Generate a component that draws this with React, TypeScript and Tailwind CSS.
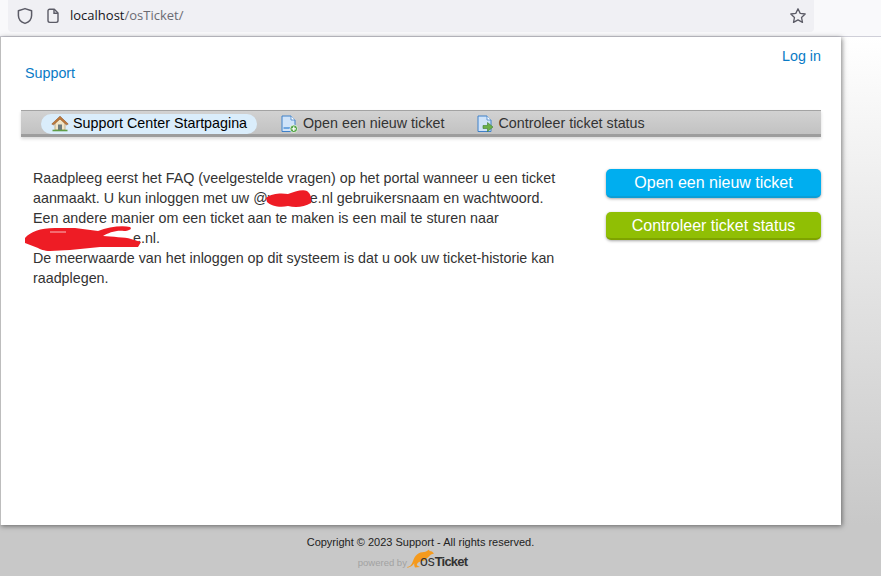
export default function App() {
  return (
    <div className="relative flex h-[576px] w-[881px] flex-col overflow-hidden font-['Liberation_Sans',Arial,sans-serif] [background-image:linear-gradient(to_bottom,#ffffff_37px,#c8c8c8_525px)]">
      <div className="flex h-[37px] w-full shrink-0 items-start border-b border-[#cfcfd8] bg-[#f9f9fb] pl-2">
        <div className="flex h-8 w-[806px] items-center rounded-b-[4px] bg-[#f0f0f4] pl-[8px] pr-[8px]">
          <svg width="18" height="18" viewBox="0 0 18 18" fill="none" stroke="#5b5b66" strokeWidth="1.5" className="shrink-0">
            <path d="M9 1.6 L15.6 3.8 V8.5 C15.6 12.6 12.6 15.2 9 16.4 C5.4 15.2 2.4 12.6 2.4 8.5 V3.8 Z" strokeLinejoin="round" />
          </svg>
          <svg width="16" height="16" viewBox="0 0 16 16" fill="none" stroke="#5b5b66" strokeWidth="1.4" className="ml-[11px] shrink-0">
            <path d="M3 2.8 A1.6 1.6 0 0 1 4.6 1.2 H9.3 L13 5 V12.6 A1.8 1.8 0 0 1 11.2 14.4 H4.8 A1.8 1.8 0 0 1 3 12.6 Z" strokeLinejoin="round" />
            <path d="M9 1.4 V5.3 H13" />
          </svg>
          <div className="ml-[9px] font-['Open_Sans',sans-serif] text-[13px] text-[#15141a]">
            localhost<span className="text-[#6b6b73]">/osTicket/</span>
          </div>
          <svg width="18" height="18" viewBox="0 0 18 18" fill="none" stroke="#5b5b66" strokeWidth="1.3" className="ml-auto translate-x-[1px] shrink-0">
            <path d="M9 1.8 L11.2 6.4 L16.2 7 L12.5 10.4 L13.5 15.4 L9 12.9 L4.5 15.4 L5.5 10.4 L1.8 7 L6.8 6.4 Z" strokeLinejoin="round" />
          </svg>
        </div>
      </div>

      <div className="relative flex h-[488px] w-[841px] shrink-0 flex-col border-l border-[#bdbdbd] bg-white px-5 shadow-[1px_1px_5px_rgba(0,0,0,0.5)]">
        <div className="flex justify-end pt-[11px] leading-4 text-[#0a7bc6]">
          <span className="text-[14.3px]">Log in</span>
        </div>
        <div className="pl-1 pt-[1px] text-[14.3px] leading-4 text-[#0a7bc6]">Support</div>

        <nav className="mt-[29px] flex h-[27px] w-[800px] items-center border-t border-b-[3px] border-t-[#a3a3a3] border-b-[#9d9d9d] bg-gradient-to-b from-[#d2d2d2] to-[#c2c2c2] pl-5 pt-[2px] text-[14.3px] text-[#333] shadow-[0_2px_3px_rgba(0,0,0,0.15)]">
          <div className="flex h-5 w-[216px] items-center rounded-[10px] bg-[#daedfb] pl-[10px] text-black">
            <svg width="18" height="17" viewBox="0 0 18 17" className="shrink-0">
              <path d="M4 8 V15 H14 V8 L9 3 Z" fill="#f1e4c6" stroke="#b59a6c" strokeWidth="0.7" />
              <rect x="7" y="9.5" width="4" height="5.5" fill="#6d7a7c" />
              <path d="M0.8 9 L9 1.2 L17.2 9 L15.4 9.8 L9 4 L2.6 9.8 Z" fill="#c07a3a" stroke="#8a5226" strokeWidth="0.6" />
              <path d="M1.5 15.5 H16.5" stroke="#5f9e47" strokeWidth="1.6" />
            </svg>
            <span className="ml-[4px]">Support Center Startpagina</span>
          </div>
          <div className="ml-[24px] flex items-center">
            <svg width="17" height="18" viewBox="0 0 17 18" className="shrink-0">
              <path d="M1 1 H10 L14 5 V16.5 H1 Z" fill="#cfe3f9" stroke="#3f80c8" strokeWidth="1" />
              <path d="M10 1 V5 H14" fill="#fff" stroke="#3f80c8" strokeWidth="0.8" />
              <rect x="2.5" y="12" width="7" height="2" fill="#6fa6e0" />
              <circle cx="12.8" cy="13.8" r="3.8" fill="#55a447" stroke="#fff" strokeWidth="0.7" />
              <path d="M12.8 11.6 V16 M10.6 13.8 H15" stroke="#fff" strokeWidth="1.3" />
            </svg>
            <span className="ml-[5px]">Open een nieuw ticket</span>
          </div>
          <div className="ml-[33px] flex items-center">
            <svg width="17" height="18" viewBox="0 0 17 18" className="shrink-0">
              <path d="M1 1 H10 L14 5 V16.5 H1 Z" fill="#cfe3f9" stroke="#3f80c8" strokeWidth="1" />
              <path d="M10 1 V5 H14" fill="#fff" stroke="#3f80c8" strokeWidth="0.8" />
              <path d="M6 10.5 H10.5 V7.5 L16 12 L10.5 16.5 V13.5 H6 Z" fill="#6cb04a" stroke="#3f7f30" strokeWidth="0.6" />
            </svg>
            <span className="ml-[4px]">Controleer ticket status</span>
          </div>
        </nav>

        <div className="mt-[31px] flex items-start justify-between">
          <div className="relative ml-3 w-[540px] text-[14.3px] leading-5 text-[#333]">
            <p>
              Raadpleeg eerst het FAQ (veelgestelde vragen) op het portal wanneer u een ticket
              <br />
              aanmaakt. U kun inloggen met uw @v<span className="inline-block w-[35px]" />e.nl gebruikersnaam en wachtwoord.
              <br />
              Een andere manier om een ticket aan te maken is een mail te sturen naar
              <br />
              <span className="inline-block w-[100px]" />e.nl.
              <br />
              De meerwaarde van het inloggen op dit systeem is dat u ook uw ticket-historie kan
              <br />
              raadplegen.
            </p>
            <svg width="320" height="70" viewBox="20 185 320 70" className="absolute left-[-13px] top-[17px]">
              <path d="M266 198 C272 193 282 193 288 194 C294 192 302 189 307 191 C311 194 312 199 311 203 C304 207 296 208 288 206 C280 208 271 206 267 202 Z" fill="#ee1c25" />
              <path d="M25 238 C30 232 40 228 55 228 L75 228 L98 231 C108 227 122 225 130 227 C133 229 128 231 124 231 C116 230 108 233 103 236 C112 237 125 237 131 239 L141 242 L138 247 L100 247 C90 248 80 249 70 250 L50 251 C44 251 40 249 38 248 L25 243 Z" fill="#ee1c25" />
              <path d="M50 232 H66" stroke="#fff" strokeWidth="1" opacity="0.7" />
            </svg>
          </div>
          <div className="mt-[1px] flex w-[215px] flex-col gap-[14px]">
            <div className="flex h-[29px] items-center justify-center rounded-[5px] border-b-2 border-[#0b9ed6] bg-[#00aeef] text-[16px] text-white shadow-[0_1px_3px_rgba(0,0,0,0.35)]">
              Open een nieuw ticket
            </div>
            <div className="flex h-[28px] items-center justify-center rounded-[5px] border-b-2 border-[#7ea300] bg-[#90bf04] pt-[2px] text-[16px] text-white shadow-[0_1px_3px_rgba(0,0,0,0.35)]">
              Controleer ticket status
            </div>
          </div>
        </div>
      </div>

      <div className="flex w-[841px] flex-col items-center pt-[11px]">
        <div className="text-[11px] leading-[13px] text-[#222]">Copyright © 2023 Support - All rights reserved.</div>
        <div className="mr-[16px] mt-[1px] flex h-[22px] items-end">
          <span className="mb-[3px] text-[9.5px] leading-3 text-[#a2a2a2]">powered by</span>
          <svg width="27" height="20" viewBox="0 0 27 20" className="mb-[3px] shrink-0">
            <path d="M0 18 C3 18 5 15 6 12 C8 6 12 3 17 3 C19 3 20 2 22 0.5 L22.5 2 L25 2.5 L27 4.5 L24 5.5 C22 7 21 9 19 10 C18 12 14 12.5 12 13 C10 14.5 9 16 11 17 L13 18 L8 18.5 C7 16 7 15 7.5 14 C6 16 4 18.5 0 18.5 Z" fill="#f59a1d" />
          </svg>
          <span className="mb-[2px] ml-[-14px] text-[14px] leading-4 text-[#333]">
            os<span className="text-[13px] font-bold tracking-[-0.8px]">Ticket</span>
          </span>
        </div>
      </div>
    </div>
  );
}
